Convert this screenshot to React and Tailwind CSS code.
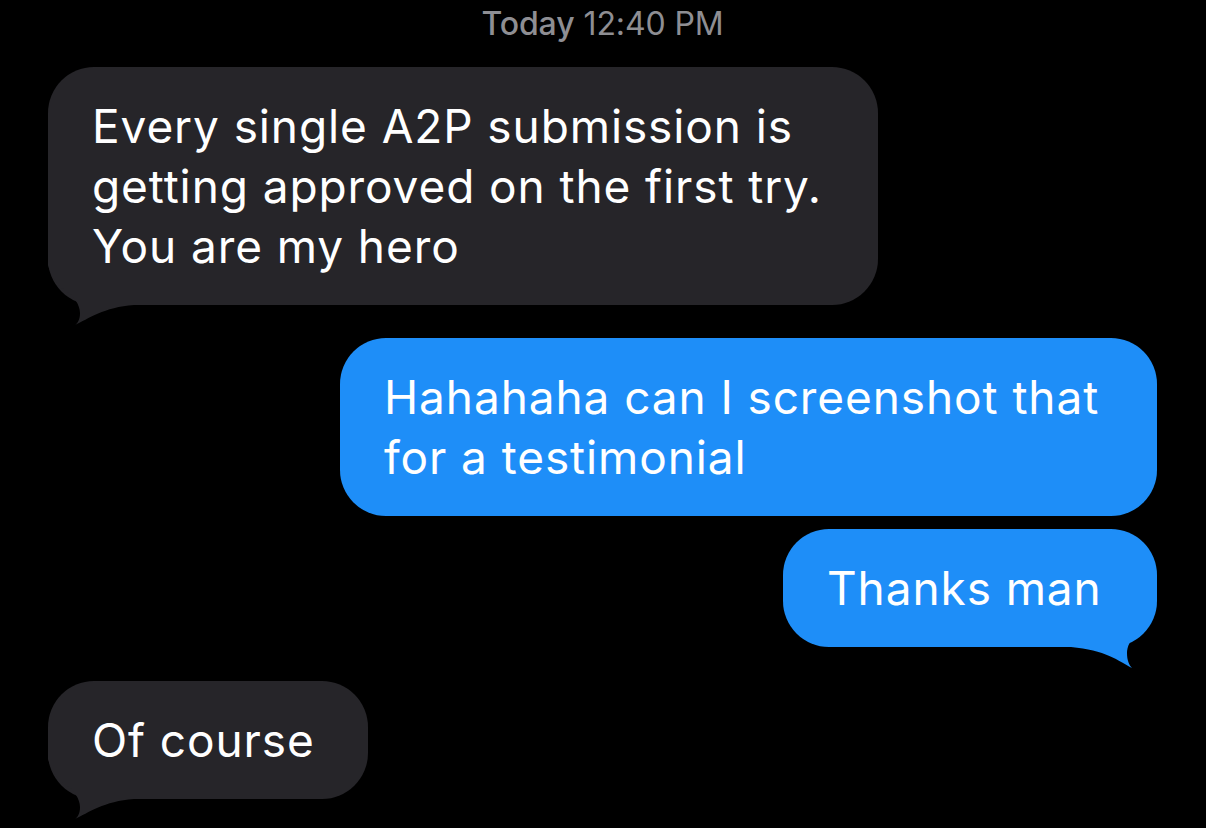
import React from "react";

const GRAY = "#262529";
const BLUE = "#1e8ef8";

function TailLeft({ color }) {
  return (
    <svg
      className="absolute left-0 bottom-[-22px]"
      width="90"
      height="72"
      viewBox="0 -50 90 72"
    >
      <path
        d="M0,-50 L0,-40 C3,-30 8,-20 17,-15 C26,-9 32,0 32,8 C32,14 30,18 27,20 C40,14 56,2 86,0 L86,-50 Z"
        fill={color}
      />
    </svg>
  );
}

function TailRight({ color }) {
  return (
    <svg
      className="absolute right-0 bottom-[-22px]"
      width="90"
      height="72"
      viewBox="-90 -50 90 72"
    >
      <path
        d="M0,-50 L-3,-40 C-6,-28 -10,-19 -18,-14 C-27,-8 -30,0 -30,6 C-30,13 -28,18 -25,21 C-38,14 -52,3 -86,0 L-86,-50 Z"
        fill={color}
      />
    </svg>
  );
}

function Bubble({ side, tail, width, children }) {
  const color = side === "left" ? GRAY : BLUE;
  return (
    <div
      className={`relative rounded-[46px] pl-[44px] pr-[30px] py-[29px] text-white text-[46px] leading-[60px] tracking-[0.9px] ${
        side === "left" ? "self-start bg-[#262529]" : "self-end bg-[#1e8ef8]"
      }`}
      style={{ width }}
    >
      {tail && (side === "left" ? <TailLeft color={color} /> : <TailRight color={color} />)}
      <div className="relative whitespace-nowrap">{children}</div>
    </div>
  );
}

export default function App() {
  return (
    <div
      className="w-[1206px] h-[828px] bg-black overflow-hidden flex flex-col pl-[48px] pr-[49px]"
      style={{ fontFamily: "Inter, 'Noto Sans', sans-serif" }}
    >
      <div className="h-[67px] flex justify-center pt-[4px] text-[32px] leading-[40px] text-[#8e8e93] tracking-[-0.1px]">
        <span className="font-medium">Today</span>
        <span className="ml-[9px]">12:40 PM</span>
      </div>
      <Bubble side="left" tail width={830}>
        Every single A2P submission is
        <br />
        getting approved on the first try.
        <br />
        You are my hero
      </Bubble>
      <div className="h-[33px]" />
      <Bubble side="right" width={817}>
        Hahahaha can I screenshot that
        <br />
        for a testimonial
      </Bubble>
      <div className="h-[13px]" />
      <Bubble side="right" tail width={374}>
        Thanks man
      </Bubble>
      <div className="h-[34px]" />
      <Bubble side="left" tail width={320}>
        Of course
      </Bubble>
    </div>
  );
}
